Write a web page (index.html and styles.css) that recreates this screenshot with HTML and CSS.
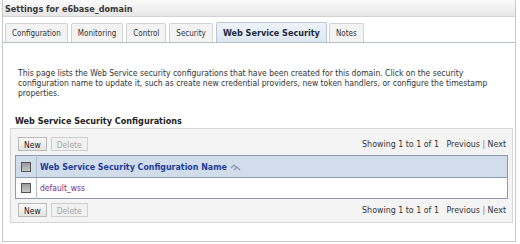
FILE: index.html
```html
<!DOCTYPE html>
<html>
<head>
<meta charset="utf-8">
<link rel="stylesheet" href="styles.css">
</head>
<body>
<div class="frame">
  <div class="titlebar">Settings for e6base_domain</div>
  <div class="tabs">
    <span class="tab">Configuration</span>
    <span class="tab">Monitoring</span>
    <span class="tab">Control</span>
    <span class="tab">Security</span>
    <span class="tab active">Web Service Security</span>
    <span class="tab">Notes</span>
  </div>
  <div class="content">
    <p class="desc">This page lists the Web Service security configurations that have been created for this domain. Click on the security configuration name to update it, such as create new credential providers, new token handlers, or configure the timestamp properties.</p>
    <h2 class="heading">Web Service Security Configurations</h2>
    <div class="box">
      <div class="toolbar">
        <div class="buttons">
          <span class="btn">New</span>
          <span class="btn disabled">Delete</span>
        </div>
        <div class="pager">Showing 1 to 1 of 1&nbsp;&nbsp; Previous <span class="sep">|</span> Next</div>
      </div>
      <table class="grid">
        <tr class="head">
          <td class="cb"><span class="check"></span></td>
          <td class="name">Web Service Security Configuration Name <svg class="sort" width="11" height="8" viewBox="0 0 11 8"><path d="M1 5 L4 2 L7 5 M4 7 L7 4 L10 7" fill="none" stroke="#8a97ae" stroke-width="1.2"/></svg></td>
        </tr>
        <tr class="row">
          <td class="cb"><span class="check"></span></td>
          <td class="name"><span class="link">default_wss</span></td>
        </tr>
      </table>
      <div class="toolbar bottom">
        <div class="buttons">
          <span class="btn">New</span>
          <span class="btn disabled">Delete</span>
        </div>
        <div class="pager">Showing 1 to 1 of 1&nbsp;&nbsp; Previous <span class="sep">|</span> Next</div>
      </div>
    </div>
  </div>
</div>
</body>
</html>
```

FILE: styles.css
```css
html, body {
  margin: 0;
  padding: 0;
  background: #ffffff;
}
body {
  font-family: "DejaVu Sans Condensed", "DejaVu Sans", sans-serif;
  font-stretch: condensed;
  font-size: 8.5px;
  color: #333333;
}
.frame {
  margin-left: 2px;
  width: 514px;
  height: 242px;
  box-sizing: border-box;
  border: 1px solid #c8c8c8;
  border-top: none;
}
.titlebar {
  height: 17px;
  box-sizing: border-box;
  padding: 4px 0 0 2px;
  font-weight: bold;
  font-size: 9px;
  color: #3a3a3a;
  background: linear-gradient(#fbfbfb, #e6e6e6);
  border-bottom: 1px solid #d4d4d4;
}
.tabs {
  display: flex;
  align-items: flex-end;
  gap: 3px;
  height: 26px;
  box-sizing: border-box;
  padding-left: 2px;
  border-bottom: 1px solid #b8bec6;
  font-size: 8px;
}
.tab {
  height: 19px;
  box-sizing: border-box;
  padding: 5px 6px 0;
  background: #f3f3f3;
  border: 1px solid #d2d2d2;
  border-bottom: none;
  border-radius: 2px 2px 0 0;
  color: #333;
  white-space: nowrap;
}
.tab.active {
  height: 20px;
  padding-top: 5px;
  margin-right: -1px;
  font-size: 9px;
  background: linear-gradient(#eef3f9, #dde7f2);
  border-color: #b9c6d6;
  font-weight: bold;
  color: #1e2a3a;
}
.content {
  padding-top: 25px;
}
.desc {
  margin: 0 0 0 15px;
  width: 485px;
  line-height: 10px;
  color: #333;
}
.heading {
  margin: 18px 0 0 12px;
  height: 11px;
  line-height: 11px;
  font-size: 9px;
  font-weight: bold;
  color: #222;
}
.box {
  margin: 1px 0 0 7px;
  width: 503px;
  box-sizing: border-box;
  background: #f4f4f4;
  border: 1px solid #d6d6d6;
  padding: 6px 4px 3px 4px;
}
.toolbar {
  display: flex;
  justify-content: space-between;
  align-items: center;
  height: 18px;
  margin-bottom: 2px;
}
.toolbar.bottom {
  margin: 2px 0 0 0;
}
.buttons {
  display: flex;
  gap: 4px;
  padding-left: 3px;
}
.btn {
  display: inline-block;
  height: 14px;
  box-sizing: border-box;
  padding: 2px 5px 0;
  background: linear-gradient(#fafafa, #e4e4e4);
  border: 1px solid #b9b9b9;
  color: #222;
}
.btn.disabled {
  color: #a6a6a6;
  border-color: #cfcfcf;
  background: #f1f1f1;
}
.pager {
  padding-right: 2px;
  font-size: 8.8px;
  color: #333;
}
.sep {
  color: #777;
}
.grid {
  width: 493px;
  border-collapse: collapse;
  border: 1px solid #8d9ab0;
}
.grid td {
  padding: 0;
}
.head td {
  height: 21px;
  background: #d2ddec;
  border-bottom: 1px solid #8d9ab0;
}
.row td {
  height: 20px;
  background: #ffffff;
}
.cb {
  width: 20px;
  text-align: center;
  border-right: 1px solid #b7c0cf;
}
.check {
  display: inline-block;
  width: 10px;
  height: 10px;
  box-sizing: border-box;
  border: 1px solid #555;
  background: linear-gradient(#9a9a9a, #c9c9c9);
  vertical-align: middle;
}
.name {
  padding-left: 3px !important;
}
.head .name {
  font-weight: bold;
  color: #1d3d99;
  font-size: 8.8px;
}
.sort {
  vertical-align: middle;
}
.link {
  color: #7b2b8c;
}
```
